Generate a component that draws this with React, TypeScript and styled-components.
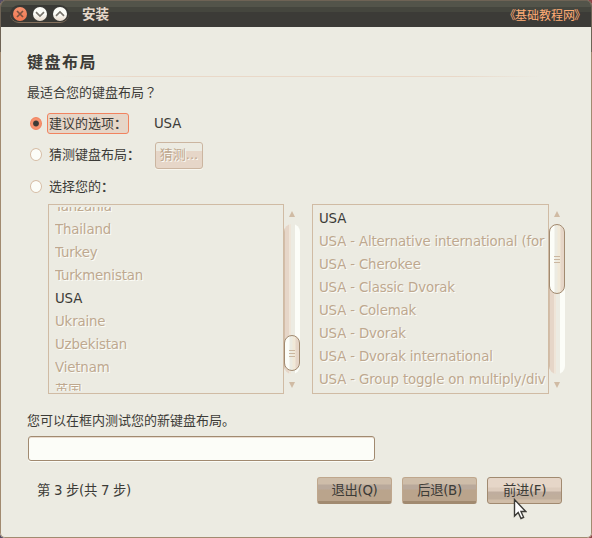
import React from "react";
import styled, { createGlobalStyle, css } from "styled-components";

const Global = createGlobalStyle`
  html, body { margin: 0; padding: 0; overflow: hidden; }
  body { background: linear-gradient(90deg, #564d63 50%, #8f4446 50%); }
  * { box-sizing: border-box; }
`;

const Window = styled.div`
  position: relative;
  width: 592px;
  height: 538px;
  display: flex;
  flex-direction: column;
  overflow: hidden;
  border-radius: 6px 6px 5px 5px;
  background: #ecebe2;
  color: #3c3b37;
  font: 13.33px "DejaVu Sans", "Noto Sans CJK SC", sans-serif;
  letter-spacing: -0.15px;
  white-space: nowrap;
  cursor: default;
`;

const Frame = styled.div`
  position: absolute;
  inset: 0;
  border: 1px solid #a18a70;
  border-radius: 6px 6px 5px 5px;
  border-top-color: #6e6355;
  pointer-events: none;
`;

const FrameShade = styled.div`
  position: absolute;
  inset: 0 0 auto 0;
  height: 52px;
  border: solid #6e6355;
  border-width: 1px 1px 0;
  border-radius: 6px 6px 0 0;
  pointer-events: none;
`;

const TitleBar = styled.header`
  height: 27px;
  flex: none;
  display: flex;
  align-items: center;
  padding: 0 10px 0 10px;
  background: linear-gradient(#53544a 0 7px, #45463e 7px 12px, #3c3b37 12px);
`;

const Controls = styled.div`
  display: flex;
  align-items: center;
  gap: 6px;
  width: 59px;
  height: 18px;
  margin-top: 1px;
  padding: 0 2px 0 3px;
  border-radius: 9px;
  background: #393935;
  border-bottom: 1px solid #84705c;
`;

const Control = styled.span<{ $close?: boolean }>`
  width: 14px;
  height: 14px;
  border-radius: 50%;
  display: flex;
  align-items: center;
  justify-content: center;
  background: ${(p) => (p.$close ? "linear-gradient(#f6926f, #f17751)" : "linear-gradient(#fcfdf8 50%, #e6d8ca)")};
`;

const Title = styled.h1`
  margin: 0 0 0 13px;
  flex: 1;
  font-size: 13.5px;
  letter-spacing: 0;
  line-height: 20px;
  font-weight: 700;
  color: #e6d8ca;
`;

const SiteTag = styled.span`
  color: #ffad76;
  font: 12px/20px "Noto Sans CJK SC", sans-serif;
  letter-spacing: 0;
  padding-top: 2px;
  margin-right: -1px;
  display: flex;
`;

const Bracket = styled.span<{ $open?: boolean }>`
  width: ${(p) => (p.$open ? 6 : 8)}px;
  display: flex;
  justify-content: ${(p) => (p.$open ? "flex-end" : "flex-start")};
  position: relative;
  left: ${(p) => (p.$open ? 1 : -1)}px;
`;

const Content = styled.main`
  flex: 1;
  display: flex;
  flex-direction: column;
  padding: 24px 29px 0 28px;
`;

const Heading = styled.h2`
  margin: 0 0 0 -1px;
  height: 25px;
  line-height: 24px;
  font-size: 16px;
  letter-spacing: 1.5px;
  font-weight: 700;
`;

const Rule = styled.div`
  height: 1px;
  background: linear-gradient(90deg, transparent 6%, #e9d8c8 20%, #e9d8c8 80%, transparent 96%);
`;

const Line = styled.p<{ $top: number }>`
  margin: ${(p) => p.$top}px 0 0 -1px;
  height: 20px;
  font-size: 13px;
  letter-spacing: 0;
  line-height: 20px;
`;

const QuestionMark = styled.span`
  font-family: "Noto Sans CJK TC", sans-serif;
`;

const Options = styled.div`
  margin-top: 6px;
  height: 96px;
  display: grid;
  grid-template-rows: 31px 32px 33px;
  margin-left: 2px;
`;

const Option = styled.div`
  display: grid;
  grid-template-columns: 13px 4px 107px auto;
  justify-content: start;
  align-items: center;
  height: 31px;
`;

const Radio = styled.span<{ $on?: boolean }>`
  width: 12px;
  height: 13px;
  border-radius: 50%;
  border: 1px solid #d6bda6;
  background: #fcfdf8;
  ${(p) =>
    p.$on &&
    css`
      border-color: #f1835f;
      background: radial-gradient(circle, #3c3b37 2.4px, #f6926f 3.5px);
    `}
`;

const OptionLabel = styled.span<{ $focus?: boolean }>`
  grid-column: 3;
  justify-self: start;
  height: 21px;
  padding: 0 1px;
  font-size: 13px;
  letter-spacing: 0;
  line-height: 19px;
  display: flex;
  border: 1px solid ${(p) => (p.$focus ? "#f1835f" : "transparent")};
  border-radius: 3px;
  background: ${(p) => (p.$focus ? "#e6d6c8" : "transparent")};
  width: ${(p) => (p.$focus ? "82px" : "auto")};
`;

const Colon = styled.span`
  -webkit-text-stroke: 0.3px #3c3b37;
`;

const GuessButton = styled.button`
  width: 48px;
  height: 27px;
  padding: 0;
  margin-left: 1px;
  margin-top: 1px;
  border: 1px solid #cbb5a0;
  border-radius: 3px;
  background: linear-gradient(#ecebe2 30%, #e6d6c8 31%);
  color: #bea88f;
  text-shadow: 1px 1px #fcfdf8;
  box-shadow: 0 1px #f8f6ef;
  font: inherit;
  font-size: 13px;
  line-height: 24px;
`;

const Lists = styled.div`
  display: flex;
  margin-left: 20px;
  height: 190px;
`;

const ListBox = styled.div<{ $w: number; $shift: number }>`
  width: ${(p) => p.$w}px;
  flex: none;
  border: 1px solid #d0bba4;
  padding: 2px 2px 2px 6px;
  & > div {
    height: 184px;
    overflow: hidden;
  }
  & > div > ul {
    list-style: none;
    padding: 0;
    margin: ${(p) => p.$shift}px 0 0;
  }
`;

const Row = styled.li<{ $selected?: boolean }>`
  height: 23px;
  line-height: 24px;
  color: ${(p) => (p.$selected ? "#3c3b37" : "#bea88f")};
  text-shadow: ${(p) => (p.$selected ? "none" : "1px 1px #fcfdf8")};
`;

const Scroll = styled.div<{ $gap: number }>`
  width: 16px;
  flex: none;
  display: flex;
  flex-direction: column;
  align-items: center;
  margin-right: ${(p) => p.$gap}px;
  padding: 7px 0 6px;
`;

const ArrowIcon = styled.svg`
  width: 6px;
  height: 6px;
  fill: #d0bba4;
`;

const Track = styled.div<{ $offset: number }>`
  flex: 1;
  width: 16px;
  margin: 7px 0 8px;
  padding-top: ${(p) => p.$offset}px;
  border-radius: 8px;
  background: linear-gradient(90deg, #d3bda8 0 1px, #e6d6c8 1px 5px, #efe5d8 5px 7px, #ecebe2 7px 11px, #fcfdf8 11px);
`;

const Thumb = styled.div<{ $h: number }>`
  width: 16px;
  height: ${(p) => p.$h}px;
  border: 1px solid #a18a70;
  border-radius: 8px;
  display: flex;
  align-items: center;
  justify-content: center;
  background: linear-gradient(90deg, #fcfdf8 0 4px, #ecebe2 5px 7px, #f1e9d8 8px 10px, #e6d6c8 11px);
  &::after {
    content: "";
    width: 6px;
    height: 7px;
    background: linear-gradient(#cbb7a0 0 1px, transparent 1px 3px, #cbb7a0 3px 4px, transparent 4px 6px, #cbb7a0 6px);
  }
`;

const TestInput = styled.input`
  width: 347px;
  height: 25px;
  margin-top: 5px;
  border: 1px solid #a18a70;
  border-radius: 3px;
  background: #fcfdf8;
  box-shadow: inset 0 1px #e9dccf, 0 1px #fcfdf8;
  outline: none;
`;

const Footer = styled.footer`
  display: flex;
  align-items: center;
  gap: 10px;
  height: 27px;
  margin: 16px 1px 0 9px;
`;

const Step = styled.span`
  flex: 1;
  line-height: 27px;
  height: 27px;
  letter-spacing: -0.3px;
`;

const NavButton = styled.button<{ $hover?: boolean }>`
  width: 75px;
  height: 27px;
  padding: 0;
  border: 1px solid #a18a70;
  border-radius: 3px;
  font: inherit;
  letter-spacing: -0.3px;
  line-height: 25px;
  color: #3c3b37;
  ${(p) =>
    p.$hover
      ? css`
          background: linear-gradient(#e6d6c8 0 9px, #ddccbd 10px 13px, #bfad9e 14px 16px, #c0ae9c 17px 21px, #d0bda8 22px);
        `
      : css`
          border-color: #bfa78d;
          border-bottom: 3px solid #a18a70;
          background: linear-gradient(#cebda9 0 6px, #b9a99b 7px 11px, #baa48c 12px);
        `}
`;

const Pointer = styled.svg`
  position: absolute;
  left: 513px;
  top: 498px;
  width: 14px;
  height: 22px;
`;

const countries = ["Tanzania", "Thailand", "Turkey", "Turkmenistan", "USA", "Ukraine", "Uzbekistan", "Vietnam", "英国"];
const layouts = [
  "USA",
  "USA - Alternative international (for",
  "USA - Cherokee",
  "USA - Classic Dvorak",
  "USA - Colemak",
  "USA - Dvorak",
  "USA - Dvorak international",
  "USA - Group toggle on multiply/div",
];

function List({ items, width, shift }: { items: string[]; width: number; shift: number }) {
  return (
    <ListBox $w={width} $shift={shift}>
      <div>
        <ul>
          {items.map((item) => (
            <Row key={item} $selected={item === "USA"}>{item}</Row>
          ))}
        </ul>
      </div>
    </ListBox>
  );
}

function ScrollBar({ offset, size, gap }: { offset: number; size: number; gap: number }) {
  return (
    <Scroll $gap={gap}>
      <ArrowIcon viewBox="0 0 6 6"><path d="M3 0 6 6H0Z" /></ArrowIcon>
      <Track $offset={offset}><Thumb $h={size} /></Track>
      <ArrowIcon viewBox="0 0 6 6"><path d="M0 0H6L3 6Z" /></ArrowIcon>
    </Scroll>
  );
}

function Glyph({ d, color }: { d: string; color: string }) {
  return (
    <svg width="10" height="10" viewBox="0 0 10 10" fill="none" stroke={color} strokeWidth="1.7">
      <path d={d} />
    </svg>
  );
}

export default function App() {
  return (
    <>
      <Global />
      <Window>
        <TitleBar>
          <Controls>
            <Control $close><Glyph color="#7a5140" d="M2 2 8 8M8 2 2 8" /></Control>
            <Control><Glyph color="#77736b" d="M1 3.2 5 7 9 3.2" /></Control>
            <Control><Glyph color="#77736b" d="M1 6.8 5 3 9 6.8" /></Control>
          </Controls>
          <Title>安装</Title>
          <SiteTag><Bracket $open>《</Bracket>基础教程网<Bracket>》</Bracket></SiteTag>
        </TitleBar>
        <Content>
          <Heading>键盘布局</Heading>
          <Rule />
          <Line $top={5}>最适合您的键盘布局<QuestionMark>？</QuestionMark></Line>
          <Options>
            <Option>
              <Radio $on />
              <OptionLabel $focus>建议的选项<Colon>：</Colon></OptionLabel>
              <span>USA</span>
            </Option>
            <Option>
              <Radio />
              <OptionLabel>猜测键盘布局<Colon>：</Colon></OptionLabel>
              <GuessButton disabled>猜测...</GuessButton>
            </Option>
            <Option>
              <Radio />
              <OptionLabel>选择您的<Colon>：</Colon></OptionLabel>
            </Option>
          </Options>
          <Lists>
            <List items={countries} width={236} shift={-12} />
            <ScrollBar offset={111} size={36} gap={12} />
            <List items={layouts} width={237} shift={0} />
            <ScrollBar offset={0} size={70} gap={0} />
          </Lists>
          <Line $top={17}>您可以在框内测试您的新键盘布局。</Line>
          <TestInput />
          <Footer>
            <Step>第 3 步(共 7 步)</Step>
            <NavButton>退出(Q)</NavButton>
            <NavButton>后退(B)</NavButton>
            <NavButton $hover>前进(F)</NavButton>
          </Footer>
        </Content>
        <Frame />
        <FrameShade />
        <Pointer viewBox="0 0 14 22">
          <path d="M1.5 1.5V18L5.2 14.5 8 20.5 10.6 19.3 8 13.5H12.7Z" fill="#fff" stroke="#3c3b37" strokeWidth="1.4" />
        </Pointer>
      </Window>
    </>
  );
}
